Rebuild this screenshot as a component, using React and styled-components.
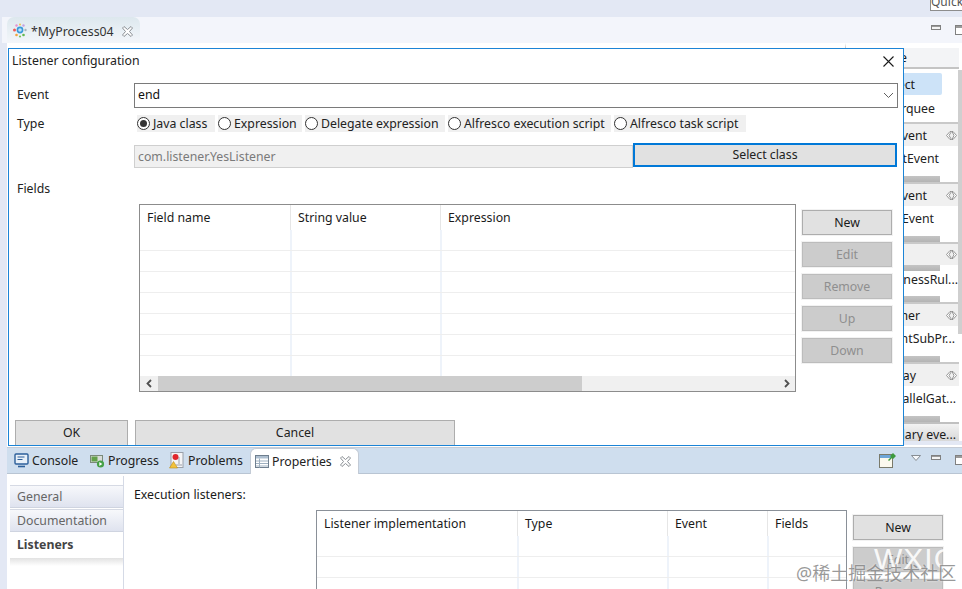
import React from 'react';
import styled, { createGlobalStyle } from 'styled-components';

const GlobalStyle = createGlobalStyle`
    html, body {
        margin: 0;
        padding: 0;
        background: #e3e8f4;
    }
    body {
        font-family: "Noto Sans", "Open Sans", "Liberation Sans", sans-serif;
        font-size: 12.3px;
        color: #1a1a1a;
    }
    * {
        box-sizing: border-box;
    }
`;

const Page = styled.div`
    position: relative;
    width: 962px;
    height: 589px;
    overflow: hidden;
    display: flex;
    flex-direction: column;
`;

const TopBand = styled.div`
    height: 17px;
    flex: none;
    display: flex;
    justify-content: flex-end;
`;

const QuickAccess = styled.div`
    width: 40px;
    height: 12px;
    margin-top: -1px;
    margin-right: -8px;
    background: #fff;
    border: 1px solid #8d8d8d;
    border-top: 0;
    font-size: 12px;
    line-height: 6px;
    color: #555;
    overflow: hidden;
`;

const EditorBar = styled.div`
    height: 26px;
    flex: none;
    margin-left: 2px;
    padding-left: 5px;
    background: #f3f5fb;
    display: flex;
    align-items: stretch;
    justify-content: space-between;
`;

const EditorTab = styled.div`
    width: 133px;
    padding: 2px 0 0 5px;
    display: flex;
    align-items: center;
    gap: 3px;
    background: linear-gradient(#dde8ee, #f3f6fa);
    border-radius: 7px 7px 0 0;
    color: #333;
`;

const TabLabel = styled.span`
    margin-right: ${(p) => p.$gap}px;
`;

const WindowControls = styled.div`
    display: flex;
    align-items: flex-start;
    gap: 14px;
    margin-right: -3px;
    padding-top: ${(p) => p.$top}px;
`;

const MinButton = styled.span`
    display: block;
    width: 10px;
    height: 5px;
    background: #f4f4f4;
    border: 1px solid #808080;
    box-shadow: inset 0 1px 0 #9a9a9a;
`;

const MaxButton = styled.span`
    display: block;
    width: 10px;
    height: 10px;
    background: #fff;
    border: 1px solid #808080;
    box-shadow: inset 0 2px 0 #9a9a9a;
`;

const EditorArea = styled.div`
    height: 404px;
    flex: none;
    margin-left: 7px;
    background: #fff;
    display: flex;
    justify-content: flex-end;
    overflow: hidden;
`;

const Palette = styled.div`
    width: 117px;
    height: 100%;
    border-left: 1px solid #c8c8c8;
    border-top: 5px solid #fff;
    display: flex;
    flex-direction: column;
    position: relative;
    background: #fff;
`;

const PaletteHead = styled.div`
    height: 21px;
    flex: none;
    background: #f3f4f6;
    border-bottom: 2px solid #c4c4c4;
    display: flex;
    justify-content: flex-end;
    align-items: center;
    padding-right: 52px;
    margin-right: 3px;
`;

const PaletteScroll = styled.div`
    position: absolute;
    top: 22px;
    height: 264px;
    right: 0;
    width: 4px;
    background: #cfcfcf;
`;

const PaletteItem = styled.div`
    height: ${(p) => p.$h}px;
    flex: none;
    width: 113px;
    display: flex;
    align-items: center;
    justify-content: flex-end;
    padding-right: ${(p) => p.$right}px;
    padding-bottom: ${(p) => p.$under}px;
    white-space: nowrap;
    color: #222;
`;

const SelectedItem = styled.div`
    height: 22px;
    width: 96px;
    margin-top: 4px;
    margin-bottom: 3px;
    flex: none;
    background: #cde3f8;
    border-radius: 0 2px 2px 0;
    display: flex;
    align-items: center;
    justify-content: flex-end;
    padding-right: 27px;
`;

const PaletteGroup = styled.div`
    height: ${(p) => p.$h || 24}px;
    width: 113px;
    flex: none;
    border-top: 2px solid #c9c9c9;
    background: #f0f0f0;
    display: flex;
    align-items: center;
    justify-content: flex-end;
    gap: ${(p) => p.$gap || 0}px;
    padding-right: 2px;
    white-space: nowrap;
`;

const Smudge = styled.div`
    height: 6px;
    width: 94px;
    flex: none;
    background: linear-gradient(#c4c4c4, #b4b4b4);
`;

const LastGroup = styled.div`
    height: 19px;
    width: 113px;
    flex: none;
    border-top: 2px solid #c0c0c0;
    padding-top: 4px;
    background: linear-gradient(#f2f2f2, #d8d8d8);
    display: flex;
    align-items: center;
    justify-content: flex-end;
    padding-right: 3px;
    white-space: nowrap;
`;

const PaletteFiller = styled.div`
    flex: 1;
    background: #e3e8f4;
`;

const BottomPanel = styled.div`
    flex: 1;
    margin-left: 7px;
    margin-top: -2px;
    display: flex;
    flex-direction: column;
    background: #fff;
    position: relative;
`;

const ViewBar = styled.div`
    height: 27px;
    flex: none;
    padding-left: 7px;
    margin-top: 2px;
    background: #cfdeee;
    border-top: 1px solid #c5ccd6;
    border-bottom: 1px solid #b9c5d3;
    display: flex;
    align-items: stretch;
`;

const ViewTab = styled.div`
    display: flex;
    align-items: center;
    gap: 3px;
    width: ${(p) => p.$w}px;
    color: #222;
    ${(p) => p.$active && `
        background: #fff;
        border: 1px solid #c3cbd6;
        border-bottom: 0;
        border-radius: 6px 6px 0 0;
        padding-left: 4px;
        margin-bottom: -1px;
    `}
`;

const ViewTools = styled.div`
    margin-left: auto;
    display: flex;
    align-items: flex-start;
`;

const PinSlot = styled.div`
    padding-top: 4px;
`;

const MenuSlot = styled.div`
    padding-top: 7px;
    margin: 0 10px 0 14px;
    line-height: 0;
`;

const ViewBody = styled.div`
    flex: 1;
    display: flex;
    min-height: 0;
`;

const SideTabs = styled.div`
    width: 117px;
    flex: none;
    padding: 9px 0 0 3px;
    border-right: 1px solid #d5dae6;
    margin-top: 2px;
`;

const SideTab = styled.div`
    height: ${(p) => p.$h}px;
    padding-left: 7px;
    display: flex;
    align-items: center;
    color: #666;
    background: linear-gradient(#f7f8fb, #dfe3ef);
    border-top: 1px solid #d6dae4;
    border-bottom: 1px solid #cfd4e0;
    margin-bottom: 1px;
    ${(p) => p.$active && `
        background: #fff;
        border: 0;
        padding-bottom: 2px;
        font-weight: 700;
        color: #444;
        margin-bottom: 0;
    `}
`;

const SideRest = styled.div`
    height: 8px;
    background: linear-gradient(#e2e2e2, #fff);
`;

const ViewContent = styled.div`
    flex: 1;
    padding: 11px 0 0 10px;
    position: relative;
`;

const ExecLabel = styled.div`
    line-height: 20px;
`;

const ExecRow = styled.div`
    display: flex;
    gap: 6px;
    margin-left: 182px;
    margin-top: 5px;
`;

const ExecTable = styled.div`
    width: 531px;
    height: 120px;
    flex: none;
    border: 1px solid #8a9098;
`;

const DataHead = styled.div`
    display: grid;
    grid-template-columns: ${(p) => p.$cols};
    height: ${(p) => p.$h}px;
    flex: none;
`;

const HeadCell = styled.div`
    padding: 3px 0 0 7px;
    line-height: 19px;
    border-right: 1px solid #e6e6e6;
    color: #1a1a1a;
    &:last-child {
        border-right: 0;
    }
`;

const DataRow = styled.div`
    display: grid;
    grid-template-columns: ${(p) => p.$cols};
    height: ${(p) => p.$h}px;
    flex: none;
    ${(p) => !p.$last && 'border-bottom: 1px solid #eeeeee;'}
`;

const BodyCell = styled.div`
    border-right: 2px solid #eef3fa;
    margin-right: -1px;
    &:last-child {
        border-right: 0;
    }
`;

const ExecButtons = styled.div`
    display: flex;
    flex-direction: column;
    gap: 7px;
    padding-top: 5px;
`;

const Dialog = styled.div`
    position: absolute;
    left: 8px;
    top: 48px;
    width: 896px;
    height: 398px;
    background: #fff;
    border: 1px solid #1c84d6;
    display: flex;
    flex-direction: column;
    padding: 0 5px 0 6px;
`;

const DialogTitle = styled.div`
    height: 24px;
    flex: none;
    margin: 0 -5px 0 -3px;
    padding-right: 9px;
    display: flex;
    align-items: center;
    justify-content: space-between;
    color: #222;
`;

const TitleText = styled.span`
    margin-top: -2px;
`;

const FormRow = styled.div`
    display: flex;
    align-items: center;
    height: ${(p) => p.$h}px;
    margin-top: ${(p) => p.$top}px;
    flex: none;
`;

const FieldLabel = styled.div`
    width: 119px;
    flex: none;
    padding-left: 2px;
    padding-bottom: ${(p) => p.$lift || 0}px;
    color: #222;
`;

const Combo = styled.div`
    flex: 1;
    height: 100%;
    border: 1px solid #7a7a7a;
    padding: 0 3px;
    display: flex;
    align-items: center;
    justify-content: space-between;
    color: #111;
`;

const ComboValue = styled.span`
    margin-top: -2px;
`;

const RadioRow = styled.div`
    display: flex;
    gap: 3px;
    margin-left: 3px;
`;

const RadioItem = styled.div`
    height: 17px;
    width: ${(p) => p.$w}px;
    background: #f0f0f0;
    display: flex;
    align-items: center;
    gap: 3px;
    color: #222;
    white-space: nowrap;
`;

const RadioDot = styled.span`
    width: 13px;
    height: 13px;
    flex: none;
    background: #fff;
    border: 1px solid #333;
    border-radius: 50%;
    position: relative;
    ${(p) => p.$on && `
        &::after {
            content: '';
            position: absolute;
            inset: 2px;
            border-radius: 50%;
            background: #333;
        }
    `}
`;

const ClassField = styled.div`
    width: 499px;
    height: 23px;
    margin-top: 4px;
    flex: none;
    background: #f0f0f0;
    border: 1px solid #cfcfcf;
    padding-left: 3px;
    display: flex;
    align-items: center;
    color: #7a7a7a;
`;

const SelectClass = styled.div`
    width: 264px;
    height: 24px;
    flex: none;
    background: #e1e1e1;
    border: 2px solid #0078d7;
    display: flex;
    align-items: center;
    justify-content: center;
    color: #222;
`;

const FieldsRow = styled.div`
    display: flex;
    margin-left: 124px;
    margin-top: 6px;
    gap: 6px;
    flex: none;
`;

const FieldsTable = styled.div`
    width: 657px;
    height: 188px;
    flex: none;
    border: 1px solid #8c8c8c;
    display: flex;
    flex-direction: column;
`;

const ScrollBar = styled.div`
    height: 15px;
    flex: none;
    background: #f0f0f0;
    display: flex;
    align-items: stretch;
`;

const ScrollArrow = styled.div`
    width: 18px;
    flex: none;
    display: flex;
    align-items: center;
    justify-content: center;
`;

const ScrollThumb = styled.div`
    width: 424px;
    flex: none;
    background: #cdcdcd;
`;

const ScrollGap = styled.div`
    flex: 1;
`;

const ButtonColumn = styled.div`
    display: flex;
    flex-direction: column;
    gap: 7px;
    padding-top: 6px;
`;

const SideButton = styled.div`
    width: 90px;
    height: 25px;
    flex: none;
    background: ${(p) => (p.$disabled ? '#cccccc' : '#e1e1e1')};
    border: 1px solid ${(p) => (p.$disabled ? '#bcbcbc' : '#adadad')};
    box-shadow: 0 0 0 1px #f2f2f2;
    color: ${(p) => (p.$disabled ? '#8f8f8f' : '#1a1a1a')};
    display: flex;
    align-items: center;
    justify-content: center;
`;

const DialogFooter = styled.div`
    margin-top: auto;
    display: flex;
    gap: 7px;
    flex: none;
`;

const FooterButton = styled.div`
    width: ${(p) => p.$w}px;
    height: 25px;
    padding-bottom: 2px;
    background: #e1e1e1;
    border: 1px solid #adadad;
    border-bottom: 0;
    display: flex;
    align-items: center;
    justify-content: center;
    color: #222;
`;

const WatermarkBig = styled.div`
    position: absolute;
    left: 874px;
    top: 542px;
    font-family: "Liberation Sans", sans-serif;
    font-size: 30px;
    line-height: 34px;
    letter-spacing: 1px;
    color: rgba(255, 255, 255, 0.9);
`;

const WatermarkSmall = styled.div`
    position: absolute;
    left: 796px;
    top: 561px;
    font-family: "Noto Sans", "Noto Sans CJK SC", sans-serif;
    font-size: 18px;
    line-height: 24px;
    white-space: nowrap;
    color: rgba(120, 120, 120, 0.75);
    text-shadow: 0 0 2px rgba(255, 255, 255, 0.8);
`;

function ProcessIcon() {
    return (
        <svg width="16" height="16" viewBox="0 0 16 16">
            <circle cx="8" cy="7" r="2.6" fill="#bfe3f8" stroke="#3a9ad9" strokeWidth="1.6" />
            <circle cx="2.5" cy="7" r="1.5" fill="#ee5a5a" />
            <circle cx="13.5" cy="7" r="1.2" fill="#a9b4bd" />
            <circle cx="4.5" cy="2.5" r="1.2" fill="#e88fd0" />
            <circle cx="8" cy="1.5" r="1" fill="#f2c24a" />
            <circle cx="11.5" cy="2.5" r="1.2" fill="#c6a0e0" />
            <circle cx="4.5" cy="12" r="1.3" fill="#f2a33a" />
            <circle cx="8" cy="13.5" r="1.1" fill="#7cc45a" />
            <circle cx="11.5" cy="12" r="1.3" fill="#63b84f" />
        </svg>
    );
}

function TabClose() {
    return (
        <svg width="11" height="11" viewBox="0 0 11 11" fill="#fff" stroke="#8a8f94" strokeWidth="1">
            <path d="M.5 2 2 .5l3.500 3 3.500-3L10.500 2l-3 3.500 3 3.500L9 10.500l-3.500-3-3.500 3L.5 9l3-3.500z" />
        </svg>
    );
}

function CloseX() {
    return (
        <svg width="11" height="11" viewBox="0 0 11 11" stroke="#1a1a1a" strokeWidth="1.1">
            <path d="M.5.5l10 10M10.500.5l-10 10" />
        </svg>
    );
}

function Chevron() {
    return (
        <svg width="11" height="7" viewBox="0 0 11 7" fill="none" stroke="#606060" strokeWidth="1">
            <path d="M1 1l4.500 4.500L10 1" />
        </svg>
    );
}

function ScrollChevron({ flip }) {
    return (
        <svg width="7" height="9" viewBox="0 0 7 9" fill="none" stroke="#505050" strokeWidth="1.8">
            <path d={flip ? 'M2 1l3.500 3.500L2 8' : 'M5 1L1.500 4.500 5 8'} />
        </svg>
    );
}

function FoldIcon() {
    return (
        <svg width="11" height="9" viewBox="0 0 11 9" fill="#fff" stroke="#8c8c8c" strokeWidth="0.9">
            <path d="M4 .5h1.500L3 4.500l2.500 4H4L.5 4.500z" />
            <path d="M7 .5h-1L8 4.500l-2 4h1l3.500-4z" />
        </svg>
    );
}

function ConsoleIcon() {
    return (
        <svg width="15" height="15" viewBox="0 0 15 15">
            <rect x="1" y="1" width="13" height="10" rx="1" fill="#e8f0f8" stroke="#2c5f9a" strokeWidth="1.4" />
            <path d="M3.500 4h7M3.500 6.500h5" stroke="#2c5f9a" strokeWidth="1" />
            <path d="M4 13.500h7" stroke="#2c5f9a" strokeWidth="1.6" />
        </svg>
    );
}

function ProgressIcon() {
    return (
        <svg width="15" height="14" viewBox="0 0 15 14">
            <rect x="0.5" y="1.500" width="12" height="7" fill="#d8dcd8" stroke="#7a8a7a" />
            <rect x="1.500" y="2.500" width="6" height="5" fill="#62a04a" />
            <circle cx="10.500" cy="10" r="3.600" fill="#46a046" />
            <path d="M9.300 8l3 2-3 2z" fill="#fff" />
        </svg>
    );
}

function ProblemsIcon() {
    return (
        <svg width="16" height="17" viewBox="0 0 16 17">
            <rect x="2" y="0.5" width="12" height="15" fill="#f4f4f6" stroke="#9aa0aa" />
            <path d="M10 5v7M13 13h-6" stroke="#9aa0aa" strokeWidth="1" />
            <circle cx="6.500" cy="5" r="3" fill="#e0262c" />
            <path d="M4.500 9.500l4 6.500h-8z" fill="#f3c23a" stroke="#b98a1a" strokeWidth="0.6" />
        </svg>
    );
}

function PropertiesIcon() {
    return (
        <svg width="14" height="13" viewBox="0 0 14 13">
            <rect x="0.5" y="0.5" width="13" height="12" fill="#fff" stroke="#6f7f8f" />
            <rect x="1" y="1" width="12" height="2.500" fill="#aebfd0" />
            <path d="M1 6h12M1 8.500h12M1 11h12M4.500 3.500V12.500" stroke="#9fb0c0" strokeWidth="1" />
        </svg>
    );
}

function PinIcon() {
    return (
        <svg width="18" height="16" viewBox="0 0 18 16">
            <rect x="0.5" y="2.500" width="13" height="13" fill="#fbf9ee" stroke="#7a7a6a" />
            <rect x="1" y="3" width="12" height="3" fill="#6ea6d8" />
            <path d="M9 8l3-3-1-1 3-3 3 3-3 3-1-1-3 3z" fill="#3d9a3d" />
        </svg>
    );
}

function MenuTriangle() {
    return (
        <svg width="10" height="6" viewBox="0 0 10 6" fill="#f6f8fb" stroke="#7d8288" strokeWidth="0.9">
            <path d="M.5.5h9L5 5.500z" />
        </svg>
    );
}

const fieldCols = '151px 150px 1fr';
const execCols = '201px 150px 100px 1fr';

function EmptyRows({ cols, count, cells }) {
    const rows = Array.from({ length: count }, (_, i) => i);
    return (
        <>
            {rows.map((r) => (
                <DataRow key={r} $cols={cols} $last={r === count - 1} $h={r === count - 1 ? 20 : 21}>
                    {Array.from({ length: cells }, (_, c) => (
                        <BodyCell key={c} />
                    ))}
                </DataRow>
            ))}
        </>
    );
}

function App() {
    return (
        <Page>
            <GlobalStyle />
            <TopBand>
                <QuickAccess>Quick</QuickAccess>
            </TopBand>
            <EditorBar>
                <EditorTab>
                    <ProcessIcon />
                    <TabLabel $gap={5}>*MyProcess04</TabLabel>
                    <TabClose />
                </EditorTab>
                <WindowControls $top={8}>
                    <MinButton />
                    <MaxButton />
                </WindowControls>
            </EditorBar>
            <EditorArea>
                <Palette>
                    <PaletteHead>Palette</PaletteHead>
                    <SelectedItem>Select</SelectedItem>
                    <PaletteItem $h={24} $right={24} $under={4}>Marquee</PaletteItem>
                    <PaletteGroup $gap={19}>Start event<FoldIcon /></PaletteGroup>
                    <PaletteItem $h={30} $right={20} $under={6}>StartEvent</PaletteItem>
                    <Smudge />
                    <PaletteGroup $gap={19}>End event<FoldIcon /></PaletteGroup>
                    <PaletteItem $h={30} $right={25} $under={6}>EndEvent</PaletteItem>
                    <Smudge />
                    <PaletteGroup $h={23}><FoldIcon /></PaletteGroup>
                    <Smudge />
                    <PaletteItem $h={25} $right={1} $under={8}>BusinessRul...</PaletteItem>
                    <Smudge />
                    <PaletteGroup $gap={26}>Container<FoldIcon /></PaletteGroup>
                    <PaletteItem $h={30} $right={4} $under={6}>EventSubPr...</PaletteItem>
                    <Smudge />
                    <PaletteGroup $gap={30}>Gateway<FoldIcon /></PaletteGroup>
                    <PaletteItem $h={30} $right={3} $under={6}>ParallelGat...</PaletteItem>
                    <Smudge />
                    <LastGroup>Boundary eve...</LastGroup>
                    <PaletteFiller />
                    <PaletteScroll />
                </Palette>
            </EditorArea>
            <BottomPanel>
                <ViewBar>
                    <ViewTab $w={76}><ConsoleIcon /><span>Console</span></ViewTab>
                    <ViewTab $w={79}><ProgressIcon /><span>Progress</span></ViewTab>
                    <ViewTab $w={81}><ProblemsIcon /><span>Problems</span></ViewTab>
                    <ViewTab $w={109} $active>
                        <PropertiesIcon />
                        <TabLabel $gap={5}>Properties</TabLabel>
                        <TabClose />
                    </ViewTab>
                    <ViewTools>
                        <PinSlot><PinIcon /></PinSlot>
                        <MenuSlot><MenuTriangle /></MenuSlot>
                        <WindowControls $top={7}>
                            <MinButton />
                            <MaxButton />
                        </WindowControls>
                    </ViewTools>
                </ViewBar>
                <ViewBody>
                    <SideTabs>
                        <SideTab $h={23}>General</SideTab>
                        <SideTab $h={23}>Documentation</SideTab>
                        <SideTab $h={25} $active>Listeners</SideTab>
                        <SideRest />
                    </SideTabs>
                    <ViewContent>
                        <ExecLabel>Execution listeners:</ExecLabel>
                        <ExecRow>
                            <ExecTable>
                                <DataHead $cols={execCols} $h={25}>
                                    <HeadCell>Listener implementation</HeadCell>
                                    <HeadCell>Type</HeadCell>
                                    <HeadCell>Event</HeadCell>
                                    <HeadCell>Fields</HeadCell>
                                </DataHead>
                                <EmptyRows cols={execCols} count={4} cells={4} />
                            </ExecTable>
                            <ExecButtons>
                                <SideButton>New</SideButton>
                                <SideButton $disabled>Edit</SideButton>
                                <SideButton $disabled>Remove</SideButton>
                            </ExecButtons>
                        </ExecRow>
                    </ViewContent>
                </ViewBody>
            </BottomPanel>

            <Dialog>
                <DialogTitle>
                    <TitleText>Listener configuration</TitleText>
                    <CloseX />
                </DialogTitle>
                <FormRow $h={25} $top={10}>
                    <FieldLabel $lift={2}>Event</FieldLabel>
                    <Combo>
                        <ComboValue>end</ComboValue>
                        <Chevron />
                    </Combo>
                </FormRow>
                <FormRow $h={17} $top={7}>
                    <FieldLabel>Type</FieldLabel>
                    <RadioRow>
                        <RadioItem $w={78}><RadioDot $on />Java class</RadioItem>
                        <RadioItem $w={84}><RadioDot />Expression</RadioItem>
                        <RadioItem $w={140}><RadioDot />Delegate expression</RadioItem>
                        <RadioItem $w={163}><RadioDot />Alfresco execution script</RadioItem>
                        <RadioItem $w={132}><RadioDot />Alfresco task script</RadioItem>
                    </RadioRow>
                </FormRow>
                <FormRow $h={25} $top={10}>
                    <FieldLabel />
                    <ClassField>com.listener.YesListener</ClassField>
                    <SelectClass>Select class</SelectClass>
                </FormRow>
                <FormRow $h={20} $top={11}>
                    <FieldLabel>Fields</FieldLabel>
                </FormRow>
                <FieldsRow>
                    <FieldsTable>
                        <DataHead $cols={fieldCols} $h={25}>
                            <HeadCell>Field name</HeadCell>
                            <HeadCell>String value</HeadCell>
                            <HeadCell>Expression</HeadCell>
                        </DataHead>
                        <EmptyRows cols={fieldCols} count={7} cells={3} />
                        <ScrollBar>
                            <ScrollArrow><ScrollChevron /></ScrollArrow>
                            <ScrollThumb />
                            <ScrollGap />
                            <ScrollArrow><ScrollChevron flip /></ScrollArrow>
                        </ScrollBar>
                    </FieldsTable>
                    <ButtonColumn>
                        <SideButton>New</SideButton>
                        <SideButton $disabled>Edit</SideButton>
                        <SideButton $disabled>Remove</SideButton>
                        <SideButton $disabled>Up</SideButton>
                        <SideButton $disabled>Down</SideButton>
                    </ButtonColumn>
                </FieldsRow>
                <DialogFooter>
                    <FooterButton $w={113}>OK</FooterButton>
                    <FooterButton $w={320}>Cancel</FooterButton>
                </DialogFooter>
            </Dialog>

            <WatermarkBig>WXIC</WatermarkBig>
            <WatermarkSmall>@稀土掘金技术社区</WatermarkSmall>
        </Page>
    );
}

export default App;
